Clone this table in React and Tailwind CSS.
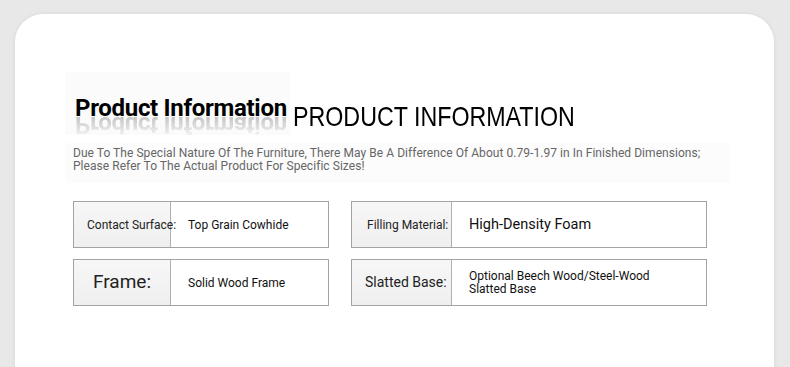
import React from 'react';

const specs = [
  [
    { label: 'Contact Surface:', labelClass: 'text-[12px] pl-[13px]', value: 'Top Grain Cowhide', valueClass: 'text-[12px] pl-[17px]' },
    { label: 'Frame:', labelClass: 'text-[19px] justify-center', value: 'Solid Wood Frame', valueClass: 'text-[12px] pl-[17px]' },
  ],
  [
    { label: 'Filling Material:', labelClass: 'text-[12px] pl-[15px]', value: 'High-Density Foam', valueClass: 'text-[14.5px] pl-[17px]' },
    { label: 'Slatted Base:', labelClass: 'text-[14px] pl-[13px]', value: 'Optional Beech Wood/Steel-Wood\nSlatted Base', valueClass: 'text-[12px] leading-[13px] pl-[17px] whitespace-pre-line' },
  ],
];

function SpecRow({ item, width, labelWidth }) {
  return (
    <div className={`flex h-[47px] border border-[#a3a3a3] bg-white ${width}`}>
      <div className={`flex items-center ${labelWidth} shrink-0 bg-gradient-to-b from-[#f7f7f7] to-[#efefef] border-r border-[#b0b0b0] text-[#222] whitespace-nowrap ${item.labelClass}`}>
        {item.label}
      </div>
      <div className={`flex items-center text-[#111] ${item.valueClass}`}>{item.value}</div>
    </div>
  );
}

export default function App() {
  return (
    <div className="min-h-screen bg-[#e8e8e8] pt-[14px] pl-[15px] overflow-hidden" style={{ fontFamily: 'Roboto, "Liberation Sans", sans-serif' }}>
      <div className="w-[759px] h-[400px] bg-white rounded-t-[28px] shadow-[0_0_4px_rgba(0,0,0,0.08)] pt-[58px] pl-[50px]">
        {/* heading with its faded mirror */}
        <div className="flex items-end">
          <div className="relative w-[225px] h-[63px] bg-[#fbfbfb] pl-[10px] pt-[22px]">
            <div className="relative z-10 text-[24px] font-bold leading-[28px] text-black tracking-[-0.3px]">Product Information</div>
            <div aria-hidden="true" className="absolute left-[10px] top-[39px] text-[24px] font-bold leading-[28px] text-[#999] tracking-[-0.3px] -scale-y-100 opacity-70 [mask-image:linear-gradient(to_top,black,transparent)]">Product Information</div>
          </div>
          <div className="ml-[3px] mb-[3px] text-[28px] leading-[30px] text-black origin-left scale-x-[0.83] whitespace-nowrap" style={{ fontFamily: '"Liberation Sans", Arial, sans-serif' }}>PRODUCT INFORMATION</div>
        </div>
        <div className="mt-[8px] w-[665px] bg-[#fcfcfc] pl-[8px] pt-[4px] pb-[10px] text-[12px] leading-[13px] tracking-[0.05px] text-[#666]">
          Due To The Special Nature Of The Furniture, There May Be A Difference Of About 0.79-1.97 in In Finished Dimensions;
          <br />
          Please Refer To The Actual Product For Specific Sizes!
        </div>

        {/* specs */}
        <div className="flex gap-[22px] mt-[18px] ml-[8px]">
          <div className="flex flex-col gap-[11px]">
            {specs[0].map((item) => (
              <SpecRow key={item.label} item={item} width="w-[256px]" labelWidth="w-[97px]" />
            ))}
          </div>
          <div className="flex flex-col gap-[11px]">
            {specs[1].map((item) => (
              <SpecRow key={item.label} item={item} width="w-[356px]" labelWidth="w-[100px]" />
            ))}
          </div>
        </div>
      </div>
    </div>
  );
}
